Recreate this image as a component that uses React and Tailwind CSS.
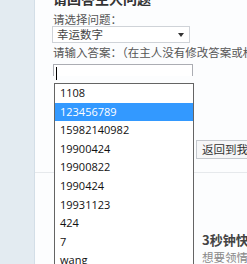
import React from 'react';

const answers = [
  '1108',
  '123456789',
  '15982140982',
  '19900424',
  '19900822',
  '1990424',
  '19931123',
  '424',
  '7',
  'wang',
];

const cjk = { fontFamily: '"Noto Sans CJK SC", "Noto Sans", sans-serif' };

export default function App() {
  return (
    <div className="relative flex w-[247px] h-[264px] overflow-hidden bg-white" style={cjk}>
      {/* side strip */}
      <div className="w-[35px] shrink-0 bg-[#e3ebf1] border-r border-[#d3dee7]"></div>

      {/* form */}
      <div className="flex-1 flex flex-col pl-[18px] bg-[#fcfdfe]">
        <div className="mt-[-10px] h-[16px] leading-[16px] text-[14px] font-bold text-[#333] whitespace-nowrap">
          请回答主人问题
        </div>
        <div className="mt-[6px] h-[15px] leading-[15px] text-[11.5px] text-[#555] whitespace-nowrap">
          请选择问题：
        </div>
        <div className="mt-[-1px] ml-[-1px] w-[138px] h-[19px] flex items-center justify-between border border-[#cfd3d8] bg-white pl-[4px] pr-[5px]">
          <span className="text-[11.5px] leading-[15px] text-[#444]">幸运数字</span>
          <svg width="6" height="4" viewBox="0 0 6 4">
            <path d="M0 0 L6 0 L3 4 Z" fill="#333" />
          </svg>
        </div>
        <div className="mt-[2px] h-[15px] leading-[15px] text-[11.5px] text-[#555] whitespace-nowrap">
          请输入答案：（在主人没有修改答案或权限的情况下）
        </div>
        <div className="mt-[4px] w-[140px] h-[18px] border border-[#abadb3] border-b-0 bg-white relative">
          <div className="absolute left-[2px] top-[2px] w-px h-[13px] bg-black"></div>
        </div>

        <div className="mt-[64px] flex items-stretch h-[19px]">
          <div className="w-[143px] shrink-0"></div>
          <div className="border border-[#c5c9ce] border-r-0 bg-[#f6f7f8] pl-[5px] text-[11.5px] leading-[17px] text-[#333] whitespace-nowrap">
            返回到我的空间
          </div>
        </div>

        <div className="mt-[13px] ml-[-18px] border-t border-[#e6e9ec]"></div>

        <div className="ml-[149px] mt-[58px] whitespace-nowrap">
          <div className="h-[17px] leading-[17px] text-[13px] font-bold text-[#444]">3秒钟快速领取</div>
          <div className="mt-[2px] h-[14px] leading-[14px] text-[11.5px] text-[#888]">想要领情</div>
        </div>
      </div>

      {/* open answer list */}
      <div
        className="absolute left-[54px] top-[83px] w-[140px] h-[200px] bg-white border border-[#646464]"
        style={{ fontFamily: '"Open Sans", "Noto Sans", sans-serif' }}
      >
        {answers.map((a) => (
          <div
            key={a}
            className={
              a === '123456789'
                ? 'h-[18.6px] leading-[18.6px] pl-[5px] text-[11px] bg-[#3399ff] text-white'
                : 'h-[18.6px] leading-[18.6px] pl-[5px] text-[11px] text-[#111]'
            }
          >
            {a}
          </div>
        ))}
      </div>
    </div>
  );
}
